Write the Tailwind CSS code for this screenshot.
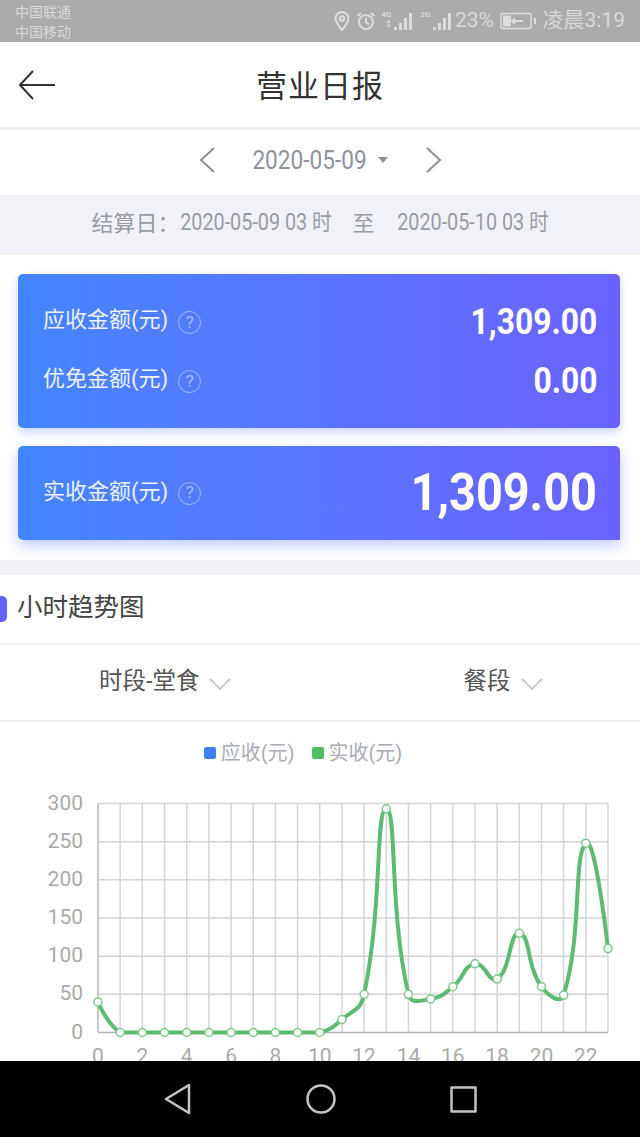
<!DOCTYPE html>
<html lang="zh-CN">
<head>
  <meta charset="UTF-8" />
  <meta name="viewport" content="width=device-width, initial-scale=1.0" />
  <title>营业日报</title>
  <script src="https://cdn.jsdelivr.net/npm/@tailwindcss/browser@4"></script>
</head>
<body class="bg-white w-[640px] h-[1137px] overflow-hidden flex flex-col font-['Roboto','Noto_Sans_CJK_SC',sans-serif]">

  <!-- status bar -->
  <div class="h-[42px] shrink-0 bg-[#ababab] flex items-center justify-between pl-[15px] pr-[15px] text-[#d8d8d8]">
    <div class="text-[14px] leading-[20px] pt-[2px]">
      <div>中国联通</div>
      <div>中国移动</div>
    </div>
    <div class="flex items-center">
      <svg class="w-[18px] h-[20px]" viewBox="0 0 18 20" fill="none" stroke="#dcdcdc" stroke-width="2">
        <path d="M9 19 C5 14 2.500 11 2.500 7.500 A6.500 6.500 0 0 1 15.500 7.500 C15.500 11 13 14 9 19Z" />
        <circle cx="9" cy="7.500" r="2.200" />
      </svg>
      <svg class="w-[20px] h-[20px] ml-[5px]" viewBox="0 0 20 20" fill="none" stroke="#dcdcdc" stroke-width="2">
        <circle cx="10" cy="11" r="7" />
        <path d="M10 7 V11.500 L13 13.500 M1.500 5 L5 2 M18.500 5 L15 2" />
      </svg>
      <div class="relative w-[34px] h-[20px] ml-[6px]">
        <span class="absolute left-0 top-[-1px] text-[8px] leading-[10px] font-bold">4G</span>
        <span class="absolute left-[3px] top-[9px] text-[8px] leading-[9px] font-bold">↕</span>
        <svg class="absolute left-[11px] top-0 w-[22px] h-[20px]" viewBox="0 0 22 20" fill="#dcdcdc">
          <rect x="1" y="16" width="3" height="3" /><rect x="6" y="12" width="3" height="7" /><rect x="11" y="7" width="3" height="12" /><rect x="16" y="2" width="3" height="17" />
        </svg>
      </div>
      <div class="relative w-[33px] h-[20px] ml-[5px]">
        <span class="absolute left-0 top-[-1px] text-[8px] leading-[10px] font-bold">2G</span>
        <svg class="absolute left-[11px] top-0 w-[22px] h-[20px]" viewBox="0 0 22 20" fill="#dcdcdc">
          <rect x="1" y="16" width="3" height="3" /><rect x="6" y="12" width="3" height="7" /><rect x="11" y="7" width="3" height="12" /><rect x="16" y="2" width="3" height="17" />
        </svg>
      </div>
      <span class="text-[21px] w-[40px] flex justify-center ml-[1px]">23%</span>
      <svg class="w-[37px] h-[18px] ml-[5px]" viewBox="0 0 37 18" fill="none">
        <rect x="1" y="1.500" width="30" height="15" rx="1.500" stroke="#dcdcdc" stroke-width="1.500" />
        <rect x="3" y="3.500" width="8" height="11" fill="#dcdcdc" />
        <path d="M12 9 H23 M15 6.500 L12 9 L15 11.500" stroke="#dcdcdc" stroke-width="2" />
        <rect x="34" y="6" width="2" height="6" fill="#dcdcdc" />
      </svg>
      <span class="text-[21px] ml-[6px]">凌晨3:19</span>
    </div>
  </div>

  <!-- header -->
  <div class="h-[88px] shrink-0 relative flex items-center justify-center border-b-[3px] border-[#f1f2f4] pt-[5px]">
    <svg class="absolute left-[18px] top-[28px] w-[38px] h-[30px]" viewBox="0 0 38 30" fill="none" stroke="#333" stroke-width="2">
      <path d="M37 15 H2 M15 1 L2 15 L15 29" />
    </svg>
    <h1 class="text-[31px] text-[#333] tracking-[1px]">营业日报</h1>
  </div>

  <!-- date picker -->
  <div class="h-[65px] shrink-0 flex items-center justify-center pb-[5px]">
    <svg class="w-[16px] h-[26px]" viewBox="0 0 16 26" fill="none" stroke="#8a8d96" stroke-width="2"><path d="M15 1 L2 13 L15 25" /></svg>
    <span class="text-[26px] leading-none text-[#8f919b] ml-[38px] scale-x-87 w-[113px] whitespace-nowrap flex justify-center">2020-05-09</span>
    <span class="ml-[12px] w-0 h-0 border-x-[5px] border-x-transparent border-t-[6px] border-t-[#8f919b]"></span>
    <svg class="w-[16px] h-[26px] ml-[38px]" viewBox="0 0 16 26" fill="none" stroke="#8a8d96" stroke-width="2"><path d="M1 1 L14 13 L1 25" /></svg>
  </div>

  <!-- settlement range -->
  <div class="h-[60px] shrink-0 bg-[#f0f2f7] flex items-center justify-center text-[#9a9ca5] text-[22px] whitespace-nowrap pb-[3px]">
    <span>结算日：</span><span class="text-[23px] w-[152px] flex justify-center scale-x-86">2020-05-09 03 时</span><span class="ml-[21px] mr-[22px]">至</span><span class="text-[23px] w-[152px] flex justify-center scale-x-86">2020-05-10 03 时</span>
  </div>

  <!-- amount cards -->
  <div class="h-[305px] shrink-0 pl-[18px] pr-[20px] pt-[19px] flex flex-col gap-[18px]">
    <div class="h-[154px] rounded-[5px] bg-gradient-to-r from-[#4285ff] to-[#6a62ff] shadow-[0_4px_10px_rgba(80,110,255,0.3)] px-[25px] pr-[23px] pt-[19px] text-white">
      <div class="h-[59px] flex items-center justify-between">
        <div class="flex items-center text-[22px] text-white/90">
          <span class="mb-[6px]">应收金额(元)</span>
          <span class="ml-[10px] w-[23px] h-[23px] rounded-full border-[1.5px] border-white/45 text-white/50 text-[17px] flex items-center justify-center">?</span>
        </div>
        <span class="text-[37px] font-bold leading-none scale-x-86 origin-right mb-[2px]">1,309.00</span>
      </div>
      <div class="h-[59px] flex items-center justify-between">
        <div class="flex items-center text-[22px] text-white/90">
          <span class="mb-[6px]">优免金额(元)</span>
          <span class="ml-[10px] w-[23px] h-[23px] rounded-full border-[1.5px] border-white/45 text-white/50 text-[17px] flex items-center justify-center">?</span>
        </div>
        <span class="text-[37px] font-bold leading-none scale-x-86 origin-right mb-[2px]">0.00</span>
      </div>
    </div>
    <div class="h-[94px] rounded-t-[5px] rounded-bl-[5px] bg-gradient-to-r from-[#4285ff] to-[#6a62ff] shadow-[0_6px_14px_rgba(80,110,255,0.35)] pl-[25px] pr-[23px] flex items-center justify-between text-white">
      <div class="flex items-center text-[22px] text-white/90">
        <span class="mb-[4px]">实收金额(元)</span>
        <span class="ml-[10px] w-[23px] h-[23px] rounded-full border-[1.5px] border-white/45 text-white/50 text-[17px] flex items-center justify-center">?</span>
      </div>
      <span class="text-[52px] font-bold leading-none scale-x-90 origin-right">1,309.00</span>
    </div>
  </div>

  <div class="h-[15px] shrink-0 bg-[#eff1f5]"></div>

  <!-- trend section -->
  <div class="h-[70px] shrink-0 flex items-center border-b-[2px] border-[#f1f2f4] pb-[2px]">
    <span class="w-[7px] h-[26px] rounded-r-[5px] bg-[#6a62ff] mt-[1px]"></span>
    <h2 class="ml-[10px] text-[25.500px] leading-none text-[#444]">小时趋势图</h2>
  </div>

  <div class="h-[77px] shrink-0 flex items-center border-b-[2px] border-[#f1f2f4] text-[23.500px] text-[#555] pb-[2px]">
    <div class="ml-[99px] flex items-center">
      <span>时段-堂食</span>
      <svg class="w-[22px] h-[12px] ml-[9px] mt-[5px]" viewBox="0 0 22 12" fill="none" stroke="#bbb" stroke-width="1.500"><path d="M1 1 L11 11 L21 1" /></svg>
    </div>
    <div class="ml-[233px] flex items-center">
      <span>餐段</span>
      <svg class="w-[22px] h-[12px] ml-[10px] mt-[5px]" viewBox="0 0 22 12" fill="none" stroke="#bbb" stroke-width="1.500"><path d="M1 1 L11 11 L21 1" /></svg>
    </div>
  </div>

  <!-- chart -->
  <div class="flex-1 min-h-0 overflow-hidden relative">
    <div class="h-[62px] flex items-center justify-center text-[20px] text-[#a9abb3] pr-[34px]">
      <span class="w-[12px] h-[12px] rounded-[2px] bg-[#3f7ff0] mr-[5px]"></span>
      <span>应收(元)</span>
      <span class="w-[12px] h-[12px] rounded-[2px] bg-[#4fbf64] ml-[17px] mr-[5px]"></span>
      <span>实收(元)</span>
    </div>
    <svg id="chart" class="absolute left-0 top-0" width="640" height="339" viewBox="0 722 640 339"></svg>
  </div>

  <!-- android nav -->
  <div class="h-[76px] shrink-0 bg-black flex items-center justify-center">
    <svg class="w-[28px] h-[32px]" viewBox="0 0 28 32" fill="none" stroke="#c4c4c4" stroke-width="2.500" stroke-linejoin="round"><path d="M25 2 V30 L2 16 Z" /></svg>
    <svg class="w-[30px] h-[30px] ml-[114px]" viewBox="0 0 30 30" fill="none" stroke="#c4c4c4" stroke-width="2.500"><circle cx="15" cy="15" r="13.500" /></svg>
    <svg class="w-[27px] h-[27px] ml-[114px]" viewBox="0 0 27 27" fill="none" stroke="#c4c4c4" stroke-width="2.500" stroke-linejoin="round"><rect x="1.500" y="1.500" width="24" height="24" /></svg>
  </div>

  <script>
    const data = [40,0,0,0,0,0,0,0,0,0,0,17,50,293,50,44,60,90,70,130,60,49,248,110];
    const x0 = 98, stepX = 510 / 23, y0 = 1032.5, stepY = 229 / 300;
    const px = i => x0 + i * stepX;
    const py = v => y0 - v * stepY;

    let svg = '';
    // grid
    for (let i = 0; i <= 23; i++) {
      const c = i === 0 ? '#b5b5b5' : '#d4d4d4';
      svg += `<line x1="${px(i)}" x2="${px(i)}" y1="${py(300)}" y2="${y0}" stroke="${c}" stroke-width="1.500"/>`;
    }
    for (let v = 0; v <= 300; v += 50) {
      const c = v === 0 ? '#b5b5b5' : '#d4d4d4';
      svg += `<line x1="${x0}" x2="${px(23)}" y1="${py(v)}" y2="${py(v)}" stroke="${c}" stroke-width="1.500"/>`;
      svg += `<text x="83" y="${py(v) + 6}" text-anchor="end" font-size="21" fill="#aaa">${v}</text>`;
    }
    for (let i = 0; i <= 22; i += 2) {
      svg += `<text x="${px(i)}" y="1063" text-anchor="middle" font-size="21" fill="#aaa">${i}</text>`;
    }

    // smooth line, control points weighted by segment length so peaks don't overshoot
    const pts = data.map((v, i) => [px(i), py(v)]);
    const dist = (a, b) => Math.hypot(a[0] - b[0], a[1] - b[1]);
    const cps = pts.map((p, i) => {
      if (i === 0 || i === pts.length - 1) return { back: p, next: p };
      const prev = pts[i - 1], next = pts[i + 1];
      const lp = dist(p, prev), ln = dist(p, next), sum = lp + ln;
      const vx = (next[0] - prev[0]) * 0.5, vy = (next[1] - prev[1]) * 0.5;
      return {
        back: [p[0] - vx * lp / sum, Math.min(p[1] - vy * lp / sum, y0)],
        next: [p[0] + vx * ln / sum, Math.min(p[1] + vy * ln / sum, y0)]
      };
    });
    let d = `M${pts[0][0]} ${pts[0][1]}`;
    for (let i = 0; i < pts.length - 1; i++) {
      const a = cps[i].next, b = cps[i + 1].back, c = pts[i + 1];
      d += ` C${a[0]} ${a[1]} ${b[0]} ${b[1]} ${c[0]} ${c[1]}`;
    }
    svg += `<path d="${d}" fill="none" stroke="#5cbb70" stroke-width="4"/>`;
    pts.forEach(p => {
      svg += `<circle cx="${p[0]}" cy="${p[1]}" r="4" fill="#fff" stroke="#7ccb8c" stroke-width="1.500"/>`;
    });
    document.getElementById('chart').innerHTML = svg;
  </script>
</body>
</html>
